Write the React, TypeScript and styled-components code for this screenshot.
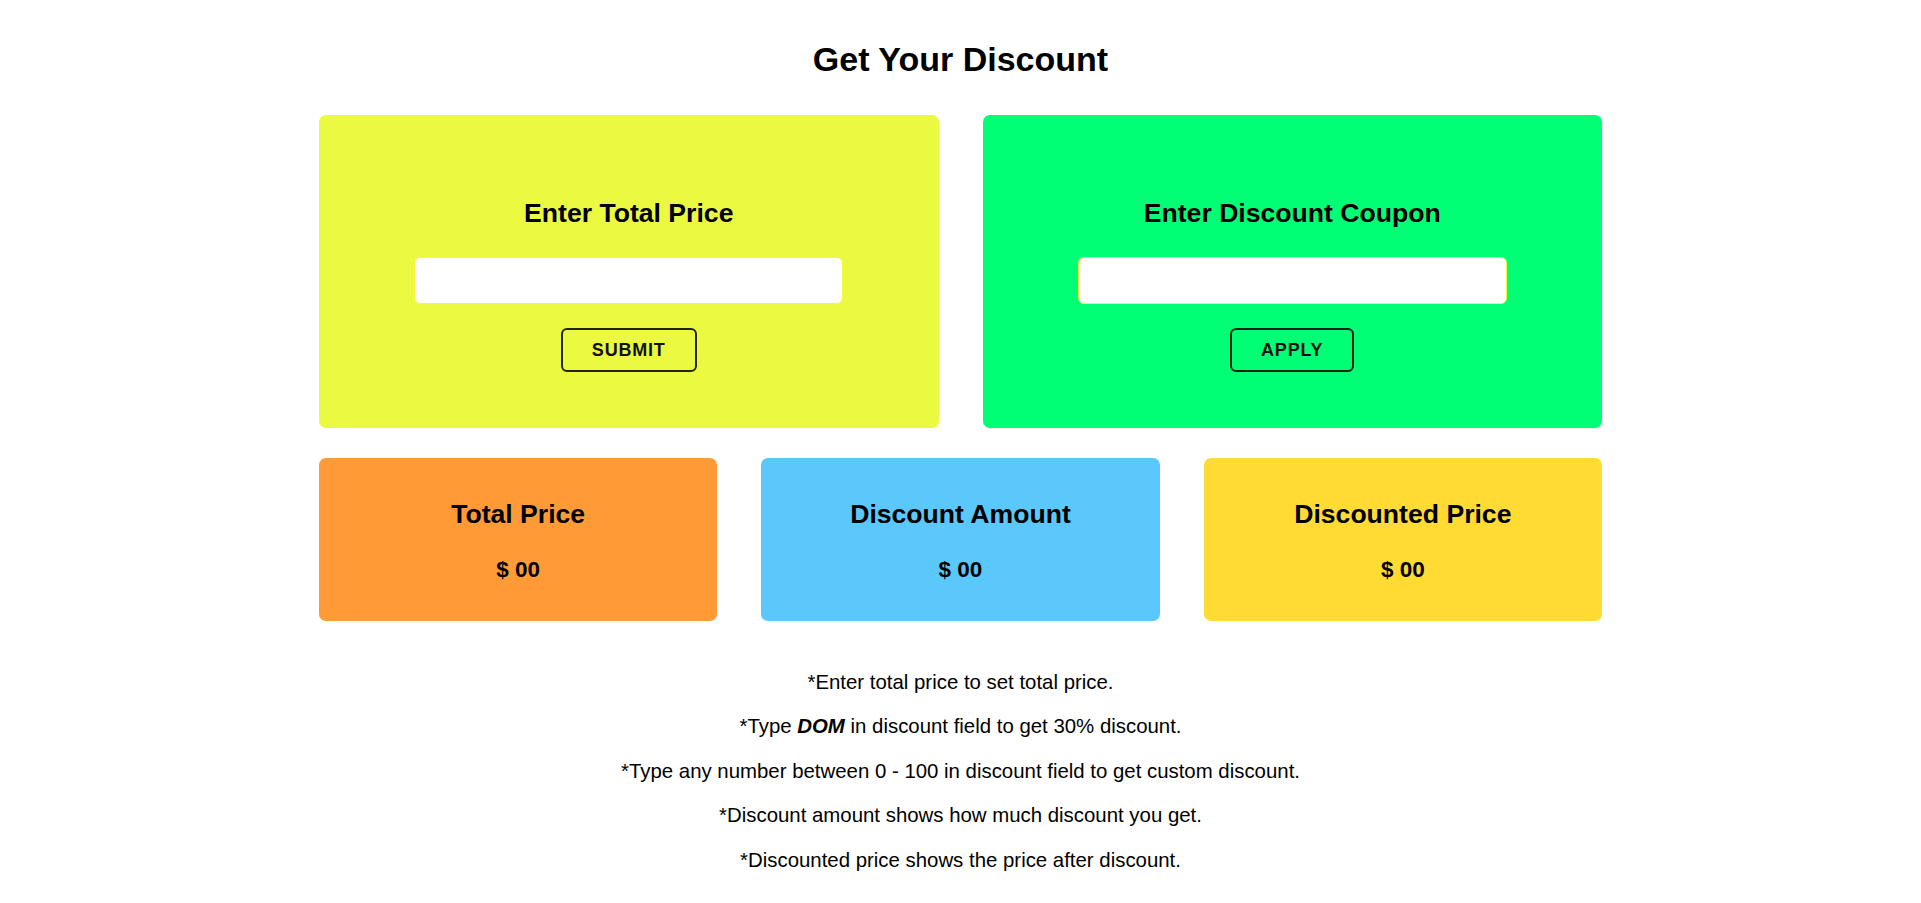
import React from "react";
import styled, { createGlobalStyle } from "styled-components";

const GlobalStyle = createGlobalStyle`
  html, body {
    margin: 0;
    padding: 0;
    background: #ffffff;
    font-family: "Liberation Sans", Arial, Helvetica, sans-serif;
    color: #000000;
  }
  * { box-sizing: border-box; }
`;

const Page = styled.main`
  width: 1283px;
  margin: 0 auto;
  padding-top: 40px;
  display: flex;
  flex-direction: column;
  align-items: stretch;
`;

const Title = styled.h1`
  margin: 0 0 37px;
  font-size: 34px;
  line-height: 38px;
  font-weight: 700;
  text-align: center;
`;

const InputRow = styled.section`
  display: grid;
  grid-template-columns: 1fr 1fr;
  gap: 44px;
`;

const InputCard = styled.div<{ $bg: string }>`
  background: ${(p) => p.$bg};
  border-radius: 7px;
  height: 313px;
  padding: 83px 0 56px;
  display: flex;
  flex-direction: column;
  align-items: center;
`;

const CardHeading = styled.h2`
  margin: 0;
  font-size: 26.6px;
  line-height: 30px;
  font-weight: 700;
  text-align: center;
`;

const TextField = styled.input`
  margin-top: 29px;
  width: 429px;
  height: 47px;
  border: 1px solid #f4f93a;
  border-radius: 6px;
  background: #ffffff;
  outline: none;
  padding: 0 12px;
  font-size: 18px;
  font-family: inherit;
`;

const ActionButton = styled.button`
  margin-top: 24px;
  height: 44px;
  padding: 0 29px;
  background: transparent;
  border: 2px solid rgba(0, 0, 0, 0.85);
  border-radius: 6px;
  font-family: "Liberation Sans", Arial, sans-serif;
  font-weight: 700;
  font-size: 18px;
  letter-spacing: 0.8px;
  color: #111111;
  cursor: pointer;
`;

const ResultRow = styled.section`
  margin-top: 30px;
  display: grid;
  grid-template-columns: repeat(3, 1fr);
  gap: 44px;
`;

const ResultCard = styled.div<{ $bg: string }>`
  background: ${(p) => p.$bg};
  border-radius: 7px;
  height: 163px;
  padding-top: 41px;
  display: flex;
  flex-direction: column;
  align-items: center;
`;

const ResultValue = styled.p`
  margin: 28px 0 0;
  font-size: 22.5px;
  line-height: 25px;
  font-weight: 700;
`;

const Notes = styled.div`
  margin-top: 50px;
  display: flex;
  flex-direction: column;
  align-items: center;
  gap: 21px;
`;

const Note = styled.p`
  margin: 0;
  font-size: 20.4px;
  line-height: 23.4px;
  text-align: center;
  white-space: nowrap;
`;

const Code = styled.strong`
  font-weight: 700;
  font-style: italic;
`;

export default function App() {
  return (
    <>
      <GlobalStyle />
      <Page>
        <Title>Get Your Discount</Title>
        <InputRow>
          <InputCard $bg="#ebf941">
            <CardHeading>Enter Total Price</CardHeading>
            <TextField type="text" />
            <ActionButton>SUBMIT</ActionButton>
          </InputCard>
          <InputCard $bg="#00ff75">
            <CardHeading>Enter Discount Coupon</CardHeading>
            <TextField type="text" />
            <ActionButton>APPLY</ActionButton>
          </InputCard>
        </InputRow>
        <ResultRow>
          <ResultCard $bg="#ff9b37">
            <CardHeading>Total Price</CardHeading>
            <ResultValue>$ 00</ResultValue>
          </ResultCard>
          <ResultCard $bg="#5ac8fb">
            <CardHeading>Discount Amount</CardHeading>
            <ResultValue>$ 00</ResultValue>
          </ResultCard>
          <ResultCard $bg="#ffdb33">
            <CardHeading>Discounted Price</CardHeading>
            <ResultValue>$ 00</ResultValue>
          </ResultCard>
        </ResultRow>
        <Notes>
          <Note>*Enter total price to set total price.</Note>
          <Note>
            *Type <Code>DOM</Code> in discount field to get 30% discount.
          </Note>
          <Note>*Type any number between 0 - 100 in discount field to get custom discount.</Note>
          <Note>*Discount amount shows how much discount you get.</Note>
          <Note>*Discounted price shows the price after discount.</Note>
        </Notes>
      </Page>
    </>
  );
}
